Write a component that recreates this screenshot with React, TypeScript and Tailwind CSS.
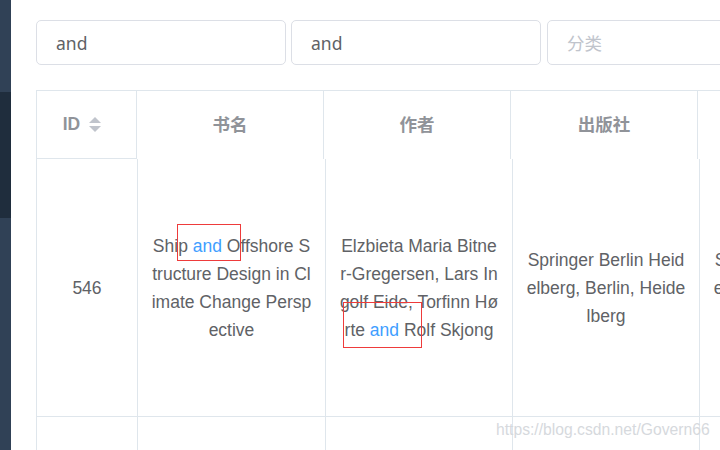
import React from 'react';

const sans = { fontFamily: '"Liberation Sans", Arial, "Noto Sans CJK SC", sans-serif' };
const inputFont = { fontFamily: '"Noto Sans", "Noto Sans CJK SC", sans-serif' };

type Row = {
    id: string;
    title: string[];
    author: string[];
    publisher: string[];
    extra: string[];
};

// words in [brackets] are the search hits
const rows: Row[] = [
    {
        id: '546',
        title: ['Ship [and] Offshore S', 'tructure Design in Cl', 'imate Change Persp', 'ective'],
        author: ['Elzbieta Maria Bitne', 'r-Gregersen, Lars In', 'golf Eide, Torfinn Hø', 'rte [and] Rolf Skjong'],
        publisher: ['Springer Berlin Heid', 'elberg, Berlin, Heide', 'lberg'],
        extra: ['Springer Berlin Heid', 'elberg, Berlin, Heide', 'lberg'],
    },
];

function Line({ text }: { text: string }) {
    const parts = text.split(/\[(.*?)\]/);
    return (
        <div className="whitespace-pre">
            {parts.map((p, i) =>
                i % 2 === 1 ? (
                    <span key={i} className="text-[#409eff]">{p}</span>
                ) : (
                    <span key={i}>{p}</span>
                )
            )}
        </div>
    );
}

function Cell({ lines }: { lines: string[] }) {
    return (
        <div className="flex flex-col items-center justify-center border-r border-b border-[#dfe6ec] text-center">
            {lines.map((l, i) => (
                <Line key={i} text={l} />
            ))}
        </div>
    );
}

export default function App() {
    return (
        <div className="relative flex w-[720px] h-[450px] overflow-hidden bg-white" style={sans}>
            <div className="w-[11px] shrink-0 flex flex-col">
                <div className="h-[92px] bg-[#304156]" />
                <div className="h-[126px] bg-[#1f2d3d]" />
                <div className="flex-1 bg-[#304156]" />
            </div>

            <div className="flex-1 min-w-0 pl-[25px] pt-[20px]">
                <div className="flex h-[45px]">
                    <input
                        readOnly
                        value="and"
                        className="w-[250px] h-[45px] shrink-0 border border-[#dcdfe6] rounded-[5px] px-[19px] text-[17.5px] text-[#606266] outline-none"
                        style={inputFont}
                    />
                    <input
                        readOnly
                        value="and"
                        className="ml-[5px] w-[250px] h-[45px] shrink-0 border border-[#dcdfe6] rounded-[5px] px-[19px] text-[17.5px] text-[#606266] outline-none"
                        style={inputFont}
                    />
                    <input
                        readOnly
                        placeholder="分类"
                        className="ml-[6px] w-[250px] h-[45px] shrink-0 border border-[#dcdfe6] rounded-[5px] px-[19px] text-[17.5px] text-[#606266] placeholder:text-[#c0c4cc] outline-none"
                        style={inputFont}
                    />
                </div>

                <div className="mt-[25px] w-[1000px] border-l border-t border-[#dfe6ec]">
                    <div className="grid grid-cols-[100px_187px_187px_187px_187px_150px] h-[68px] text-[17.5px] font-bold text-[#909399]">
                        <div className="flex items-center justify-center border-r border-b border-[#dfe6ec]">
                            <span>ID</span>
                            <span className="w-[30px] flex flex-col items-center gap-[3px]">
                                <span className="w-0 h-0 border-x-[6px] border-x-transparent border-b-[6px] border-b-[#c0c4cc]" />
                                <span className="w-0 h-0 border-x-[6px] border-x-transparent border-t-[6px] border-t-[#c0c4cc]" />
                            </span>
                        </div>
                        <div className="flex items-center justify-center border-r border-[#dfe6ec]">书名</div>
                        <div className="flex items-center justify-center border-r border-[#dfe6ec]">作者</div>
                        <div className="flex items-center justify-center border-r border-[#dfe6ec]">出版社</div>
                        <div className="border-r border-[#dfe6ec]" />
                        <div className="border-r border-[#dfe6ec]" />
                    </div>

                    {rows.map((r) => (
                        <div
                            key={r.id}
                            className="grid grid-cols-[101px_188px_187px_187px_187px_150px] h-[258px] text-[17.5px] leading-[28px] text-[#606266]"
                        >
                            <Cell lines={[r.id]} />
                            <Cell lines={r.title} />
                            <Cell lines={r.author} />
                            <Cell lines={r.publisher} />
                            <Cell lines={r.extra} />
                            <div className="border-r border-b border-[#dfe6ec]" />
                        </div>
                    ))}

                    <div className="grid grid-cols-[101px_188px_187px_187px_187px_150px] h-[60px]">
                        <div className="border-r border-[#dfe6ec]" />
                        <div className="border-r border-[#dfe6ec]" />
                        <div className="border-r border-[#dfe6ec]" />
                        <div className="border-r border-[#dfe6ec]" />
                        <div className="border-r border-[#dfe6ec]" />
                        <div className="border-r border-[#dfe6ec]" />
                    </div>
                </div>
            </div>

            {/* red annotation boxes drawn on the screenshot */}
            <div className="absolute left-[177px] top-[224px] w-[64px] h-[37px] border border-[#ee3b3b]" />
            <div className="absolute left-[343px] top-[302px] w-[79px] h-[46px] border border-[#ee3b3b]" />

            <div className="absolute left-[496px] top-[420px] text-[15.7px] leading-[20px] text-[#d6d9dd] whitespace-nowrap">
                https://blog.csdn.net/Govern66
            </div>
        </div>
    );
}
